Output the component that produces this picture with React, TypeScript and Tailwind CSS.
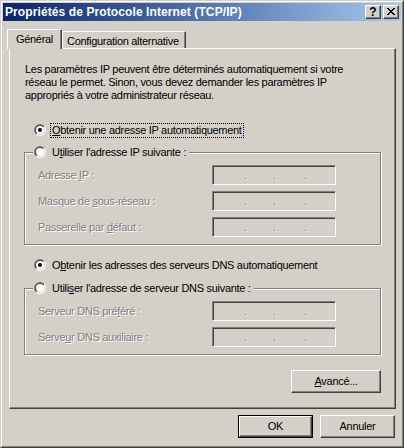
import { useId, type ReactNode } from "react";

const disabled = "text-[#808080] [text-shadow:1px_1px_0_#fff]";

function Radio({ checked }: { checked?: boolean }) {
  const id = useId().replace(/[^a-zA-Z0-9]/g, "");
  return (
    <svg width="12" height="12" viewBox="0 0 12 12" className="shrink-0">
      <defs>
        <linearGradient id={`${id}o`} x1="0" y1="0" x2="1" y2="1">
          <stop offset="0.5" stopColor="#808080" />
          <stop offset="0.5" stopColor="#ffffff" />
        </linearGradient>
        <linearGradient id={`${id}i`} x1="0" y1="0" x2="1" y2="1">
          <stop offset="0.5" stopColor="#404040" />
          <stop offset="0.5" stopColor="#d4d0c8" />
        </linearGradient>
      </defs>
      <circle cx="6" cy="6" r="6" fill={`url(#${id}o)`} />
      <circle cx="6" cy="6" r="5" fill={`url(#${id}i)`} />
      <circle cx="6" cy="6" r="4" fill="#ffffff" />
      {checked ? <circle cx="6" cy="6" r="2" fill="#000000" /> : null}
    </svg>
  );
}

function IpField() {
  return (
    <div className="flex h-[20px] w-[124px] items-start border border-b-white border-l-[#808080] border-r-white border-t-[#808080] bg-[#d4d0c8] shadow-[inset_1px_1px_0_#404040]">
      <span className="ml-[32px] mt-[12px] h-px w-px bg-[#808080] shadow-[1px_1px_0_#fff]" />
      <span className="ml-[28px] mt-[12px] h-px w-px bg-[#808080] shadow-[1px_1px_0_#fff]" />
      <span className="ml-[30px] mt-[12px] h-px w-px bg-[#808080] shadow-[1px_1px_0_#fff]" />
    </div>
  );
}

function FieldRow({ children }: { children: ReactNode }) {
  return (
    <div className="flex h-[20px] items-center pl-[13px]">
      <span className={`w-[174px] ${disabled}`}>{children}</span>
      <IpField />
    </div>
  );
}

function GroupBox({ caption, children }: { caption: ReactNode; children: ReactNode }) {
  return (
    <div className="ml-[14px] flex w-[357px] flex-col border border-[#808080] pb-[7px] shadow-[inset_1px_1px_0_#fff,1px_1px_0_#fff]">
      <div className="-mt-[9px] ml-[8px] flex h-[16px] w-fit items-center gap-[6px] bg-[#d4d0c8] pl-px pr-[3px]">
        <Radio />
        <span>{caption}</span>
      </div>
      <div className="mt-[5px] flex flex-col gap-[6px]">{children}</div>
    </div>
  );
}

function Button({ children, isDefault, width }: { children: ReactNode; isDefault?: boolean; width: string }) {
  return (
    <div className={`h-[23px] ${width} ${isDefault ? "border border-black" : ""}`}>
      <div className="flex h-full w-full items-center justify-center border border-b-[#404040] border-l-white border-r-[#404040] border-t-white shadow-[inset_-1px_-1px_0_#808080]">
        {children}
      </div>
    </div>
  );
}

function CaptionButton({ children }: { children: ReactNode }) {
  return (
    <div className="flex h-[14px] w-[16px] items-center justify-center border border-b-[#404040] border-l-white border-r-[#404040] border-t-white bg-[#d4d0c8] shadow-[inset_-1px_-1px_0_#808080]">
      {children}
    </div>
  );
}

function CloseGlyph() {
  return (
    <svg width="8" height="7" viewBox="0 0 8 7" shapeRendering="crispEdges" className="-mt-px">
      <path
        fill="#000"
        d="M0 0h2v1H0zM6 0h2v1H6zM1 1h2v1H1zM5 1h2v1H5zM2 2h4v1H2zM3 3h2v1H3zM2 4h4v1H2zM1 5h2v1H1zM5 5h2v1H5zM0 6h2v1H0zM6 6h2v1H6z"
      />
    </svg>
  );
}

export default function App() {
  return (
    <div className="h-[448px] w-[404px] bg-[#d4d0c8] font-['Liberation_Sans',Arial,sans-serif] text-[11px] leading-[13px] tracking-[-0.3px] text-black">
      <div className="h-full border border-b-[#404040] border-l-[#d4d0c8] border-r-[#404040] border-t-[#d4d0c8]">
        <div className="flex h-full flex-col border border-b-[#808080] border-l-white border-r-[#808080] border-t-white p-px">
          <div className="flex h-[18px] shrink-0 items-center justify-between bg-linear-to-r from-[#0a246a] to-[#a6caf0] px-[2px]">
            <span className="text-[12px] font-bold leading-[18px] tracking-[0.1px] text-white">
              Propriétés de Protocole Internet (TCP/IP)
            </span>
            <div className="flex items-center gap-[2px]">
              <CaptionButton>
                <span className="text-[12px] font-bold leading-none tracking-normal">?</span>
              </CaptionButton>
              <CaptionButton>
                <CloseGlyph />
              </CaptionButton>
            </div>
          </div>

          <div className="ml-[4px] mt-[8px] flex h-[19px] items-end">
            <div className="relative z-10 -mb-px h-[20px] w-[55px] border-l border-r border-t border-l-white border-r-[#404040] border-t-white bg-[#d4d0c8] pt-[3px] text-center shadow-[inset_-1px_0_0_#808080]">
              Général
            </div>
            <div className="h-[17px] w-[124px] border-l border-r border-t border-l-white border-r-[#404040] border-t-white pl-[4px] pt-[3px] shadow-[inset_-1px_0_0_#808080]">
              Configuration alternative
            </div>
          </div>

          <div className="ml-[6px] flex h-[361px] w-[387px] flex-col border border-b-[#404040] border-l-white border-r-[#404040] border-t-white shadow-[inset_-1px_-1px_0_#808080]">
            <p className="ml-[15px] mt-[14px]">
              Les paramètres IP peuvent être déterminés automatiquement si votre
              <br />
              réseau le permet. Sinon, vous devez demander les paramètres IP
              <br />
              appropriés à votre administrateur réseau.
            </p>

            <div className="ml-[24px] mt-[20px] flex h-[16px] items-center gap-[4px]">
              <Radio checked />
              <span className="border border-dotted border-black px-px">
                <u>O</u>btenir une adresse IP automatiquement
              </span>
            </div>

            <div className="mt-[14px]">
              <GroupBox
                caption={
                  <>
                    U<u>t</u>iliser l'adresse IP suivante :
                  </>
                }
              >
                <FieldRow>
                  Adresse <u>I</u>P :
                </FieldRow>
                <FieldRow>
                  Masque de <u>s</u>ous-réseau :
                </FieldRow>
                <FieldRow>
                  Passerelle par <u>d</u>éfaut :
                </FieldRow>
              </GroupBox>
            </div>

            <div className="ml-[24px] mt-[12px] flex h-[16px] items-center gap-[4px]">
              <Radio checked />
              <span className="border border-transparent px-px">
                O<u>b</u>tenir les adresses des serveurs DNS automatiquement
              </span>
            </div>

            <div className="mt-[15px]">
              <GroupBox
                caption={
                  <>
                    Utili<u>s</u>er l'adresse de serveur DNS suivante :
                  </>
                }
              >
                <FieldRow>
                  Serveur DNS pré<u>f</u>éré :
                </FieldRow>
                <FieldRow>
                  Serve<u>u</u>r DNS auxiliaire :
                </FieldRow>
              </GroupBox>
            </div>

            <div className="ml-[281px] mt-[15px]">
              <Button width="w-[90px]">
                <span>
                  <u>A</u>vancé...
                </span>
              </Button>
            </div>
          </div>

          <div className="ml-[235px] mt-[6px] flex gap-[7px]">
            <Button isDefault width="w-[75px]">
              OK
            </Button>
            <Button width="w-[75px]">Annuler</Button>
          </div>
        </div>
      </div>
    </div>
  );
}
